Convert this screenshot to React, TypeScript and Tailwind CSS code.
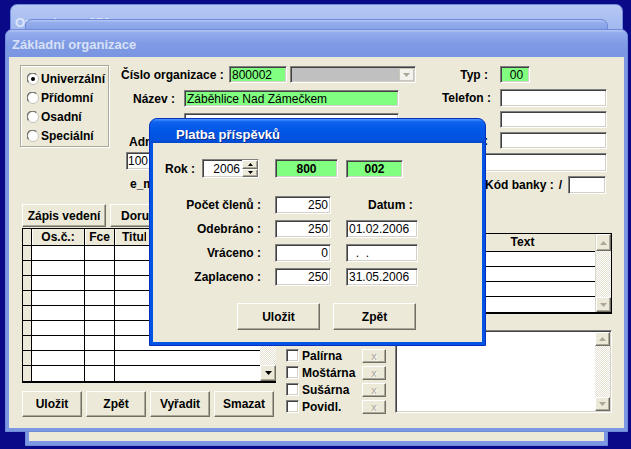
import React from "react";

const sunken =
  "border border-t-[#808080] border-l-[#808080] border-r-white border-b-white shadow-[inset_1px_1px_0_#404040,inset_-1px_-1px_0_#d4d0c8]";
const raised =
  "bg-[#ece9d8] border border-t-white border-l-white border-r-[#716f64] border-b-[#716f64] shadow-[inset_-1px_-1px_0_#aca899]";
const checker =
  "bg-[repeating-conic-gradient(#ffffff_0%_25%,#e3e0d2_0%_50%)] bg-[length:2px_2px]";
const inactiveTitle =
  "bg-[linear-gradient(to_bottom,#b6c8f3_0%,#93acec_10%,#809be5_50%,#7a95e1_100%)]";

function Radio({ checked }: { checked?: boolean }) {
  return (
    <svg width="12" height="12" viewBox="0 0 12 12" className="shrink-0">
      <circle cx="6" cy="6" r="5.5" fill="#ffffff" stroke="#c4c2b8" />
      <path d="M1.7 9.3 A5.1 5.1 0 0 1 9.3 1.7" fill="none" stroke="#707070" strokeWidth="1.2" />
      {checked && <circle cx="6" cy="6" r="2" fill="#000000" />}
    </svg>
  );
}

function Tri({ dir, color, w = 7, h = 4 }: { dir: "up" | "down"; color: string; w?: number; h?: number }) {
  return (
    <svg width={w} height={h} viewBox={`0 0 ${w} ${h}`}>
      {dir === "up" ? (
        <polygon points={`0,${h} ${w / 2},0 ${w},${h}`} fill={color} />
      ) : (
        <polygon points={`0,0 ${w},0 ${w / 2},${h}`} fill={color} />
      )}
    </svg>
  );
}

function ScrollBtn({ dir, cls, dark }: { dir: "up" | "down"; cls: string; dark?: boolean }) {
  return (
    <div className={`flex shrink-0 items-center justify-center ${raised} ${cls}`}>
      <Tri dir={dir} color={dark ? "#000000" : "#aca899"} />
    </div>
  );
}

function Field({ cls, children }: { cls: string; children?: React.ReactNode }) {
  return <div className={`flex shrink-0 items-center overflow-hidden whitespace-pre ${sunken} ${cls}`}>{children}</div>;
}

function Btn({ cls, children }: { cls: string; children: React.ReactNode }) {
  return (
    <div className={`flex shrink-0 items-center justify-center text-[12px] font-bold ${raised} ${cls}`}>{children}</div>
  );
}

function LeftGrid() {
  const rows = Array.from({ length: 9 });
  return (
    <div className="mt-[1px] flex h-[155px] w-[254px] border-l border-t border-b-2 border-black bg-white">
      <div className="flex flex-1 flex-col overflow-hidden">
        <div className="flex h-[17px] shrink-0 border-b border-black bg-[#ece9d8] text-[12px] font-bold leading-[16px]">
          <div className="w-[9px] border-r border-black" />
          <div className="w-[53px] border-r border-black text-center shadow-[inset_1px_0_0_#ffffff]">Os.č.:</div>
          <div className="w-[30px] border-r border-black text-center shadow-[inset_1px_0_0_#ffffff]">Fce</div>
          <div className="w-[42px] border-r border-black pl-[7px] shadow-[inset_1px_0_0_#ffffff]">
            <span className="block w-[24px] overflow-hidden whitespace-nowrap">Titul</span>
          </div>
          <div className="flex-1 shadow-[inset_1px_0_0_#ffffff]" />
        </div>
        {rows.map((_, i) => (
          <div key={i} className={`flex h-[15px] shrink-0 ${i < 8 ? "border-b border-black" : ""}`}>
            <div className="w-[9px] border-r border-black bg-[#ece9d8]" />
            <div className="w-[53px] border-r border-black" />
            <div className="w-[30px] border-r border-black" />
            <div className="flex-1" />
          </div>
        ))}
      </div>
      <div className="flex w-[16px] flex-col">
        <ScrollBtn dir="up" cls="h-[16px]" dark />
        <div className={`flex-1 ${checker}`} />
        <ScrollBtn dir="down" cls="h-[16px]" dark />
      </div>
    </div>
  );
}

function TextGrid() {
  const rows = Array.from({ length: 4 });
  return (
    <div className="mt-[29px] flex h-[81px] w-[217px] border border-b-2 border-black bg-white">
      <div className="flex flex-1 flex-col overflow-hidden">
        <div className="flex h-[18px] shrink-0 border-b border-black bg-[#ece9d8] text-[12px] font-bold leading-[17px]">
          <div className="w-[54px] border-r border-black" />
          <div className="flex-1 text-center">Text</div>
        </div>
        {rows.map((_, i) => (
          <div key={i} className={`h-[15px] shrink-0 ${i < 3 ? "border-b border-black" : ""}`} />
        ))}
      </div>
      <div className="flex w-[16px] flex-col border-l border-[#d8d6cc]">
        <ScrollBtn dir="up" cls="h-[17px]" />
        <div className={`flex-1 ${checker}`} />
        <ScrollBtn dir="down" cls="h-[15px]" />
      </div>
    </div>
  );
}

function Memo() {
  return (
    <div className={`mt-[16px] flex h-[83px] w-[217px] bg-white ${sunken}`}>
      <div className="flex-1" />
      <div className="flex w-[16px] flex-col py-[1px] pr-[1px]">
        <ScrollBtn dir="up" cls="h-[14px]" />
        <div className={`flex-1 ${checker}`} />
        <ScrollBtn dir="down" cls="h-[14px]" />
      </div>
    </div>
  );
}

function MainContent() {
  return (
    <div className="flex flex-1 flex-col bg-[#ece9d8] text-[12px] text-black">
      {/* top area */}
      <div className="flex h-[147px] shrink-0 items-start">
        <div className="ml-[11px] mt-[8px] h-[82px] w-[89px] shrink-0 border border-[#aca899] pl-[6px] pt-[3px] shadow-[inset_1px_1px_0_#ffffff,1px_1px_0_#ffffff]">
          {[
            ["Univerzální", true],
            ["Přídomní", false],
            ["Osadní", false],
            ["Speciální", false],
          ].map(([t, c]) => (
            <div key={t as string} className="flex h-[19px] items-center gap-[2px] font-bold">
              <Radio checked={c as boolean} />
              <span>{t as string}</span>
            </div>
          ))}
        </div>

        <div className="ml-[12px] mt-[9px] flex w-[300px] shrink-0 flex-col">
          <div className="flex h-[17px] items-center">
            <span className="w-[108px] shrink-0 font-bold">Číslo organizace :</span>
            <Field cls="h-[17px] w-[58px] bg-[#80ff80] pl-[2px]">800002</Field>
            <div className={`ml-[3px] flex h-[17px] w-[126px] bg-[#c0c0c0] ${sunken}`}>
              <div className="flex-1" />
              <div className="my-[1px] mr-[1px] flex w-[15px] items-center justify-center border border-[#c9c7ba] bg-[#f3f2ec]">
                <Tri dir="down" color="#aca899" />
              </div>
            </div>
          </div>
          <div className="mt-[7px] flex h-[17px] items-center">
            <span className="w-[63px] shrink-0 pr-[9px] text-right font-bold">Název :</span>
            <Field cls="h-[17px] w-[215px] bg-[#80ff80] pl-[2px]">Záběhlice Nad Zámečkem</Field>
          </div>
          <div className="mt-[6px] flex h-[17px] items-center">
            <span className="w-[63px] shrink-0" />
            <Field cls="h-[17px] w-[215px] bg-white" />
          </div>
          <span className="ml-[8px] mt-[5px] block w-[20px] overflow-hidden whitespace-nowrap font-bold leading-[14px]">
            Adresa :
          </span>
          <Field cls="ml-[5px] mt-[3px] h-[18px] w-[200px] bg-white pl-[1px]">100</Field>
          <span className="ml-[9px] mt-[7px] block w-[19px] overflow-hidden whitespace-nowrap font-bold leading-[14px]">
            e_mail :
          </span>
        </div>

        <div className="mt-[9px] flex w-[186px] shrink-0 flex-col">
          <div className="flex h-[17px] items-center">
            <span className="w-[79px] shrink-0 pr-[12px] text-right font-bold">Typ :</span>
            <Field cls="h-[17px] w-[30px] justify-center bg-[#80ff80] pl-[3px]">00</Field>
          </div>
          <div className="mt-[6px] flex h-[18px] items-center">
            <span className="w-[79px] shrink-0 pr-[9px] text-right font-bold">Telefon :</span>
            <Field cls="h-[18px] w-[107px] bg-white" />
          </div>
          <div className="mt-[4px] flex h-[17px] items-center">
            <span className="w-[79px] shrink-0" />
            <Field cls="h-[17px] w-[107px] bg-white" />
          </div>
          <div className="mt-[4px] flex h-[17px] items-center">
            <span className="w-[79px] shrink-0 pr-[12px] text-right font-bold">:</span>
            <Field cls="h-[17px] w-[107px] bg-white" />
          </div>
          <Field cls="mt-[4px] h-[19px] w-[186px] bg-white" />
          <div className="mt-[4px] flex h-[18px] items-center justify-end pr-[1px] font-bold">
            <span className="mr-[5px]">Kód banky :</span>
            <span className="mr-[6px]">/</span>
            <Field cls="h-[18px] w-[38px] bg-white" />
          </div>
        </div>
      </div>

      {/* bottom area */}
      <div className="flex flex-1">
        <div className="ml-[13px] flex w-[254px] shrink-0 flex-col">
          <div className="flex h-[23px] gap-[4px]">
            <Btn cls="h-[23px] w-[84px]">Zápis vedení</Btn>
            <div className={`flex h-[23px] w-[84px] shrink-0 items-center pl-[10px] text-[12px] font-bold ${raised}`}>
              <span className="block w-[28px] overflow-hidden whitespace-nowrap">Doručení</span>
            </div>
          </div>
          <LeftGrid />
          <div className="mt-[8px] flex gap-[4px]">
            <Btn cls="h-[26px] w-[60px]">Uložit</Btn>
            <Btn cls="h-[26px] w-[60px]">Zpět</Btn>
            <Btn cls="h-[26px] w-[60px]">Vyřadit</Btn>
            <Btn cls="h-[26px] w-[60px]">Smazat</Btn>
          </div>
        </div>

        <div className="ml-[10px] mt-[143px] flex w-[99px] shrink-0 flex-col">
          {["Palírna", "Moštárna", "Sušárna", "Povidl."].map((t) => (
            <div key={t} className="flex h-[17px] items-center">
              <div className={`h-[13px] w-[13px] shrink-0 bg-white ${sunken}`} />
              <span className="ml-[3px] w-[60px] shrink-0 font-bold">{t}</span>
              <div
                className={`flex h-[14px] w-[24px] shrink-0 items-center justify-center text-[11px] leading-[12px] text-[#aca899] [text-shadow:1px_1px_0_#ffffff] ${raised}`}
              >
                x
              </div>
            </div>
          ))}
        </div>

        <div className="ml-[10px] flex w-[217px] shrink-0 flex-col">
          <TextGrid />
          <Memo />
        </div>
      </div>
    </div>
  );
}

function Dialog() {
  const rows: [string, string, string | null][] = [
    ["Počet členů :", "250", null],
    ["Odebráno :", "250", "01.02.2006"],
    ["Vráceno :", "0", "  .  ."],
    ["Zaplaceno :", "250", "31.05.2006"],
  ];
  return (
    <div className="absolute left-[149px] top-[118px] flex h-[228px] w-[337px] flex-col overflow-hidden rounded-t-[8px] border border-[#0a2fc0] bg-[#0054e3]">
      <div className="h-[24px] shrink-0 bg-[linear-gradient(to_bottom,#4a98fb_0%,#0e62ee_12%,#0056e6_50%,#0152dd_88%,#0046c9_100%)] pl-[26px] pt-[8px] text-[13px] font-bold leading-[16px] text-white [text-shadow:1px_1px_0_#0a2a8c]">
        Platba příspěvků
      </div>
      <div className="mx-[3px] mb-[3px] flex flex-1 flex-col bg-[#ece9d8] text-[12px] text-black">
        <div className="mt-[16px] flex h-[19px] items-center">
          <span className="ml-[12px] w-[37px] shrink-0 font-bold">Rok :</span>
          <div className={`flex h-[19px] w-[57px] shrink-0 bg-white ${sunken}`}>
            <div className="flex flex-1 items-center justify-end pr-[2px]">2006</div>
            <div className="flex w-[16px] flex-col">
              <div className={`flex flex-1 items-center justify-center ${raised}`}>
                <Tri dir="up" color="#000000" w={5} h={3} />
              </div>
              <div className={`flex flex-1 items-center justify-center ${raised}`}>
                <Tri dir="down" color="#000000" w={5} h={3} />
              </div>
            </div>
          </div>
          <Field cls="ml-[16px] h-[19px] w-[63px] justify-center bg-[#80ff80] font-bold">800</Field>
          <Field cls="ml-[8px] h-[18px] w-[57px] justify-center bg-[#80ff80] font-bold">002</Field>
        </div>

        <div className="mt-[18px] flex flex-col gap-[6px]">
          {rows.map(([l, v, d]) => (
            <div key={l} className="flex h-[18px] items-center">
              <span className="w-[122px] shrink-0 pr-[14px] text-right font-bold">{l}</span>
              <Field cls="h-[18px] w-[56px] justify-end bg-white pr-[2px]">{v}</Field>
              {d === null ? (
                <span className="ml-[37px] font-bold">Datum :</span>
              ) : (
                <Field cls="ml-[15px] h-[18px] w-[72px] bg-white pl-[2px]">{d}</Field>
              )}
            </div>
          ))}
        </div>

        <div className="mt-[17px] flex">
          <Btn cls="ml-[84px] h-[27px] w-[83px]">Uložit</Btn>
          <Btn cls="ml-[13px] h-[27px] w-[83px]">Zpět</Btn>
        </div>
      </div>
    </div>
  );
}

export default function App() {
  return (
    <div className="relative h-[449px] w-[631px] overflow-hidden bg-[#0a0a88] font-['Liberation_Sans',Arial,sans-serif]">
      {/* back window */}
      <div className={`absolute left-[10px] top-[4px] h-[420px] w-[613px] rounded-t-[7px] border border-[#6f8ad8] ${inactiveTitle}`}>
        <div className="pl-[4px] pt-[10px] text-[13px] font-bold leading-[16px] text-[#dde5f8]">Organizace 879</div>
      </div>

      {/* middle window */}
      <div className="absolute left-[25px] top-[19px] flex h-[427px] w-[583px] flex-col rounded-t-[7px] border border-[#6f8ad8] bg-[#7d98e3]">
        <div className={`h-[27px] shrink-0 rounded-t-[6px] ${inactiveTitle}`} />
        <div className="mx-[3px] mb-[4px] flex-1 bg-[#ece9d8]" />
      </div>

      {/* front window */}
      <div className="absolute left-[5px] top-[29px] flex h-[403px] w-[623px] flex-col overflow-hidden rounded-t-[7px] border border-[#6f8ad8] bg-[#7d98e3]">
        <div className={`h-[27px] shrink-0 pl-[6px] pt-[7px] text-[13px] font-bold leading-[16px] text-[#d8e1f6] ${inactiveTitle}`}>
          Základní organizace
        </div>
        <div className="mx-[3px] mb-[3px] flex flex-1 flex-col">
          <MainContent />
        </div>
      </div>

      <Dialog />
    </div>
  );
}
